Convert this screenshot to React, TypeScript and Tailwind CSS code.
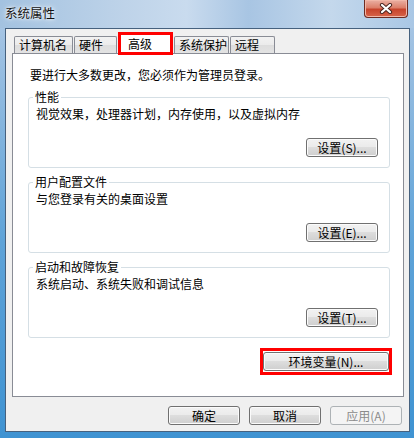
import React from 'react';

type BtnProps = {
  label: string;
  width?: string;
  disabled?: boolean;
};

const Btn = ({ label, width = 'w-[72px]', disabled = false }: BtnProps) => (
  <div
    className={`flex h-[19px] items-center justify-center rounded-[3px] border text-[12px] leading-none ${width} ${
      disabled
        ? 'border-[#adb2b5] bg-[#f4f4f4] text-[#8b8b8b]'
        : 'border-[#707070] bg-[linear-gradient(#f2f2f2_0%,#ebebeb_45%,#dddddd_50%,#cfcfcf_100%)] text-black shadow-[inset_0_0_0_1px_#fbfbfb]'
    }`}
  >
    {label}
  </div>
);

type GroupProps = {
  title: string;
  text: string;
  button: string;
  className?: string;
};

const Group = ({ title, text, button, className = '' }: GroupProps) => (
  <fieldset className={`rounded-[3px] border border-[#d5dfe5] pb-[10px] ${className}`}>
    <legend className="ml-[4px] px-[2px] text-[12px] leading-[14px]">{title}</legend>
    <div className="mt-[2px] px-[7px] text-[12px] leading-[16px]">{text}</div>
    <div className="mt-[16px] flex justify-end pr-[11px]">
      <Btn label={button} />
    </div>
  </fieldset>
);

const tabs = [
  { name: '计算机名', w: 'w-[59px]' },
  { name: '硬件', w: 'w-[43px]' },
  { name: '高级', w: 'w-[55px]', active: true },
  { name: '系统保护', w: 'w-[55px]' },
  { name: '远程', w: 'w-[45px]' },
];

export default function App() {
  return (
    <div className="flex h-[438px] w-[414px] flex-col overflow-hidden bg-[linear-gradient(180deg,#b1cbe6_0%,#9fc1e2_10%,#5fa3d8_55%,#3f93d2_100%)] font-['Noto_Sans_CJK_SC','Noto_Sans',sans-serif] text-black">
      {/* title bar */}
      <div className="flex h-[28px] shrink-0 items-start justify-between bg-[linear-gradient(90deg,#a3c2e0_0%,#bed3e9_30%,#c9dbee_45%,#a8c5e3_60%,#c4d8ec_80%,#a9c7e5_100%)]">
        <span className="ml-[5px] mt-[5px] text-[12.5px] leading-[16px] text-[#111] [text-shadow:0_0_6px_#ffffff,0_0_3px_#ffffff]">
          系统属性
        </span>
        <div className="mr-[6px] flex h-[18px] w-[44px] items-center justify-center rounded-b-[4px] border border-t-0 border-[#6d2b22] bg-[linear-gradient(#eab0a3_0%,#dc7f6a_45%,#c7442c_55%,#d7644a_100%)] shadow-[inset_0_0_0_1px_#f1b7a8]">
          <svg width="14" height="11" viewBox="0 0 14 11">
            <path d="M3 2 L11 9 M11 2 L3 9" stroke="#4a2520" strokeWidth="4.2" strokeLinecap="round" fill="none" />
            <path d="M3 2 L11 9 M11 2 L3 9" stroke="#ffffff" strokeWidth="2.3" strokeLinecap="round" fill="none" />
          </svg>
        </div>
      </div>

      {/* client area */}
      <div className="ml-[5px] mr-[4px] flex h-[404px] flex-col border border-[#46617e] bg-[#f0f0f0]">
        {/* tabs */}
        <div className="relative z-10 ml-[8px] mt-[3px] flex h-[21px] items-end gap-[1px] text-[12px]">
          {tabs.map((t) =>
            t.active ? (
              <div
                key={t.name}
                className={`-mb-[2px] flex h-[23px] items-start border-[3px] border-[#ff0000] bg-white pl-[7px] pt-[1px] leading-[15px] ${t.w}`}
              >
                {t.name}
              </div>
            ) : (
              <div
                key={t.name}
                className={`flex h-[17px] items-center rounded-t-[2px] border border-b-0 border-[#898c95] bg-[linear-gradient(#f2f2f2_0%,#ebebeb_50%,#dddddd_51%,#e3e3e3_100%)] pl-[4px] leading-none ${t.w}`}
              >
                {t.name}
              </div>
            )
          )}
        </div>

        {/* tab panel */}
        <div className="ml-[6px] mr-[5px] flex h-[344px] flex-col border border-[#898c95] bg-white pl-[15px] pr-[13px] pt-[13px]">
          <div className="ml-[2px] text-[12px] leading-[16px]">要进行大多数更改，您必须作为管理员登录。</div>
          <Group
            className="mt-[7px]"
            title="性能"
            text="视觉效果，处理器计划，内存使用，以及虚拟内存"
            button="设置(S)..."
          />
          <Group className="mt-[7px]" title="用户配置文件" text="与您登录有关的桌面设置" button="设置(E)..." />
          <Group
            className="mt-[7px]"
            title="启动和故障恢复"
            text="系统启动、系统失败和调试信息"
            button="设置(T)..."
          />
          <div className="-mr-[2px] mt-[10px] flex justify-end">
            <div className="border-[3px] border-[#ff0000] py-[1px]">
              <Btn label="环境变量(N)..." width="w-[126px]" />
            </div>
          </div>
        </div>

        {/* dialog buttons */}
        <div className="mr-[7px] mt-[9px] flex justify-end gap-[9px]">
          <Btn label="确定" />
          <Btn label="取消" />
          <Btn label="应用(A)" disabled />
        </div>
      </div>
    </div>
  );
}
